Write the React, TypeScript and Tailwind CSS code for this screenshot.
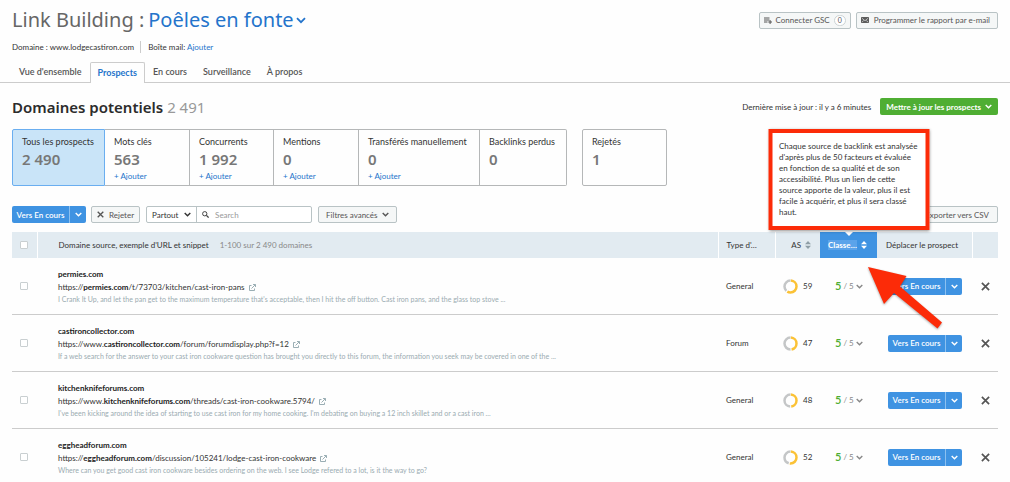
import type { ReactNode } from "react";

type Card = { label: string; value: string; add?: boolean; active?: boolean; size: string };

const cards: Card[] = [
  { label: "Tous les prospects", value: "2 490", active: true, size: "w-[93px]" },
  { label: "Mots clés", value: "563", add: true, size: "w-[85px]" },
  { label: "Concurrents", value: "1 992", add: true, size: "w-[84px]" },
  { label: "Mentions", value: "0", add: true, size: "w-[85px]" },
  { label: "Transférés manuellement", value: "0", add: true, size: "w-[121px]" },
  { label: "Backlinks perdus", value: "0", size: "w-[87px]" },
];

type Prospect = { domain: string; before: string; after: string; snippet: string; type: string; score: number };

const prospects: Prospect[] = [
  {
    domain: "permies.com",
    before: "https://",
    after: "/t/73703/kitchen/cast-iron-pans",
    snippet:
      "I Crank It Up, and let the pan get to the maximum temperature that's acceptable, then I hit the off button. Cast iron pans, and the glass top stove ...",
    type: "General",
    score: 59,
  },
  {
    domain: "castironcollector.com",
    before: "https://www.",
    after: "/forum/forumdisplay.php?f=12",
    snippet:
      "If a web search for the answer to your cast iron cookware question has brought you directly to this forum, the information you seek may be covered in one of the ...",
    type: "Forum",
    score: 47,
  },
  {
    domain: "kitchenknifeforums.com",
    before: "https://www.",
    after: "/threads/cast-iron-cookware.5794/",
    snippet:
      "I've been kicking around the idea of starting to use cast iron for my home cooking. I'm debating on buying a 12 inch skillet and or a cast iron ...",
    type: "General",
    score: 48,
  },
  {
    domain: "eggheadforum.com",
    before: "https://",
    after: "/discussion/105241/lodge-cast-iron-cookware",
    snippet: "Where can you get good cast iron cookware besides ordering on the web. I see Lodge refered to a lot, is it the way to go?",
    type: "General",
    score: 52,
  },
];

const tabs = ["Vue d'ensemble", "Prospects", "En cours", "Surveillance", "À propos"];

function Chevron({ className = "h-[5px] w-[7px]", thick = 2 }: { className?: string; thick?: number }) {
  return (
    <svg viewBox="0 0 10 7" className={className} fill="none" stroke="currentColor" strokeWidth={thick} aria-hidden="true">
      <path d="M1 1.2 5 5.2 9 1.2" />
    </svg>
  );
}

function Cross({ className }: { className: string }) {
  return (
    <svg viewBox="0 0 10 10" className={className} fill="none" stroke="currentColor" strokeWidth="1.9" aria-hidden="true">
      <path d="M1 1 9 9M9 1 1 9" />
    </svg>
  );
}

function Sorter({ color }: { color: string }) {
  return (
    <svg viewBox="0 0 6 8" className={`h-2 w-[6px] ${color}`} fill="currentColor" aria-hidden="true">
      <path d="M3 0 6 3.2H0ZM3 8 0 4.8H6Z" />
    </svg>
  );
}

function ExternalIcon() {
  return (
    <svg viewBox="0 0 14 14" className="h-[7px] w-[7px] text-[#8fa5ab]" fill="none" stroke="currentColor" strokeWidth="1.8" aria-hidden="true">
      <path d="M5 3H1V13H11V9M5 9 12.5 1.5M8 1H13V6" />
    </svg>
  );
}

function Donut({ value }: { value: number }) {
  return (
    <svg viewBox="0 0 30 30" className="h-[15px] w-[15px] -rotate-90" fill="none" strokeWidth="5" aria-hidden="true">
      <circle cx="15" cy="15" r="12" stroke="#c4c6c7" pathLength="100" strokeDasharray={`${96 - value} 100`} strokeDashoffset={-value - 2} />
      <circle cx="15" cy="15" r="12" stroke="#fbc236" pathLength="100" strokeDasharray={`${value - 2} 100`} strokeDashoffset="-1" />
    </svg>
  );
}

function SplitButton() {
  return (
    <span className="inline-flex h-[17px] overflow-hidden rounded-xs bg-[#3f93e2] align-middle text-white">
      <button type="button" className="w-[58px] border-r border-[#8cc0f0] text-center font-semibold">
        Vers En cours
      </button>
      <button type="button" aria-label="Plus d'options" className="flex w-4 items-center justify-center">
        <Chevron />
      </button>
    </span>
  );
}

function GhostButton({ children, className = "" }: { children: ReactNode; className?: string }) {
  return (
    <button
      type="button"
      className={`flex h-[17px] shrink-0 items-center rounded-xs border border-[#b9c3c5] bg-[#f5f7f7] text-[#555] ${className}`}
    >
      {children}
    </button>
  );
}

function Tick({ label }: { label: string }) {
  return (
    <input
      type="checkbox"
      aria-label={label}
      className="ml-2 block h-2 w-2 appearance-none rounded-[1px] border border-[#c9cfd1] bg-white checked:bg-[#3f93e2]"
    />
  );
}

function Tip() {
  return (
    <div
      role="tooltip"
      className="absolute bottom-full left-1/2 z-10 mb-[2px] w-[161px] -translate-x-1/2 border-4 border-[#fc2b08] bg-white px-[7px] py-2 text-left font-normal leading-[11px] whitespace-nowrap text-[#333] shadow-[0_1px_3px_rgba(0,0,0,0.45)]"
    >
      Chaque source de backlink est analysée
      <br />
      d'après plus de 50 facteurs et évaluée
      <br />
      en fonction de sa qualité et de son
      <br />
      accessibilité. Plus un lien de cette
      <br />
      source apporte de la valeur, plus il est
      <br />
      facile à acquérir, et plus il sera classé
      <br />
      haut.
    </div>
  );
}

function RedArrow() {
  return (
    <svg
      viewBox="0 0 76 64"
      className="pointer-events-none absolute top-[35px] left-12 z-10 h-16 w-[76px] max-w-none drop-shadow-[0_1px_1px_rgba(0,0,0,0.35)]"
      fill="#fc2b08"
      aria-hidden="true"
    >
      <path d="M0 0 38.5 9 32 19.5 74 55.5 69.5 61.5 26 26 16 37Z" />
    </svg>
  );
}

export default function App() {
  return (
    <div className="min-h-screen bg-[#fefefe] pt-2 font-['Lato',sans-serif] text-[8px] leading-3 text-[#333]">
      <header>
        <div className="flex h-6 items-center justify-between px-3">
          <h1 className="flex items-center gap-1 font-['Noto_Sans',sans-serif] text-[20px] leading-6 text-[#666]">
            <span>Link Building :</span>
            <button type="button" className="flex items-center gap-[2px] text-[#2474cb]">
              Poêles en fonte
              <Chevron className="h-[7px] w-[10px]" thick={1.8} />
            </button>
          </h1>
          <div className="flex gap-[5px]">
            <GhostButton className="gap-1 px-1">
              <svg viewBox="0 0 16 14" className="h-[7px] w-2" fill="none" stroke="currentColor" strokeWidth="2" aria-hidden="true">
                <path d="M0 2H11M0 6H11M0 10H7M8.5 10H16M12.2 6.2V14" />
              </svg>
              Connecter GSC
              <span className="flex h-[11px] w-3 items-center justify-center rounded-full border border-[#ccd3d5] bg-white text-[7px] leading-none">0</span>
            </GhostButton>
            <GhostButton className="gap-[5px] pr-[7px] pl-1">
              <svg viewBox="0 0 16 12" className="h-[6px] w-2" aria-hidden="true">
                <rect width="16" height="12" rx="1.5" fill="#5c5c5c" />
                <path d="M2 2.5 8 7.5 14 2.5M2 10 5.5 7M14 10 10.5 7" fill="none" stroke="#f5f7f7" strokeWidth="1.2" />
              </svg>
              Programmer le rapport par e-mail
            </GhostButton>
          </div>
        </div>
        <div className="mt-[9px] flex h-3 items-center px-3">
          <span className="border-r border-[#ccc] pr-[6px]">Domaine : www.lodgecastiron.com</span>
          <span className="pl-[7px]">
            Boîte mail:{" "}
            <a href="#mail" className="text-[#2474cb]">
              Ajouter
            </a>
          </span>
        </div>
        <nav className="mt-[9px] flex h-[21px] items-end border-b border-[#ccc] pl-[11px] text-[9px] font-semibold text-[#555]">
          {tabs.map((tab) =>
            tab === "Prospects" ? (
              <a
                key={tab}
                href="#prospects"
                aria-current="page"
                className="-mb-px flex h-[21px] items-center rounded-t-xs border border-b-0 border-[#ccc] bg-[#fefefe] px-[7px] font-bold text-[#2474cb]"
              >
                {tab}
              </a>
            ) : (
              <a key={tab} href="#tab" className="flex h-5 items-center px-2">
                {tab}
              </a>
            ),
          )}
        </nav>
      </header>

      <main className="px-3">
        <div className="mt-[15px] flex h-[17px] items-center justify-between">
          <h2 className="flex gap-1 font-['Noto_Sans',sans-serif] text-[15px] font-semibold text-[#2c2c2c]">
            Domaines potentiels
            <span className="font-normal text-[#999]">2 491</span>
          </h2>
          <div className="flex items-center gap-[9px]">
            <span>Dernière mise à jour : il y a 6 minutes</span>
            <button type="button" className="flex h-[17px] items-center gap-1 rounded-xs bg-[#4fae33] px-[6px] font-bold text-white">
              Mettre à jour les prospects
              <Chevron />
            </button>
          </div>
        </div>

        <div className="mt-[14px] flex gap-[15px]">
          <ul className="flex">
            {cards.map((card, i) => (
              <li
                key={card.label}
                className={`h-[57px] border px-[9px] pt-[6px] whitespace-nowrap ${card.size} ${i ? "border-l-0" : "rounded-l-xs"} ${
                  i === cards.length - 1 ? "rounded-r-xs" : ""
                } ${card.active ? "border-[#6aaef0] bg-[#c9e4f8]" : "border-[#b5b7b8]"}`}
              >
                <div className="text-[9px]">{card.label}</div>
                <div className="mt-[2px] font-['Noto_Sans',sans-serif] text-[15px] leading-[18px] font-semibold text-[#777]">{card.value}</div>
                {card.add && (
                  <a href="#ajouter" className="mt-[2px] block text-[#2474cb]">
                    + Ajouter
                  </a>
                )}
              </li>
            ))}
          </ul>
          <div className="h-[57px] w-[85px] rounded-xs border border-[#b5b7b8] px-[9px] pt-[6px]">
            <div className="text-[9px]">Rejetés</div>
            <div className="mt-[2px] font-['Noto_Sans',sans-serif] text-[15px] leading-[18px] font-semibold text-[#777]">1</div>
          </div>
        </div>

        <div className="mt-5 flex h-[17px] items-center">
          <SplitButton />
          <GhostButton className="ml-[5px] gap-[5px] px-[5px]">
            <Cross className="h-[7px] w-[7px]" />
            Rejeter
          </GhostButton>
          <div className="ml-[6px] flex h-[17px] w-[166px] rounded-xs border border-[#b9c3c5] bg-white">
            <div className="relative flex w-[50px] items-center border-r border-[#b9c3c5]">
              <select aria-label="Portée de la recherche" className="h-full w-full appearance-none pl-[5px] outline-none">
                <option>Partout</option>
              </select>
              <Chevron className="pointer-events-none absolute right-[5px] h-[5px] w-[7px]" />
            </div>
            <label className="flex min-w-0 flex-1 items-center gap-[6px] pl-[5px]">
              <svg viewBox="0 0 14 14" className="h-[7px] w-[7px] shrink-0" fill="none" stroke="#444" strokeWidth="2" aria-hidden="true">
                <circle cx="5.5" cy="5.5" r="4.3" />
                <path d="M8.8 8.8 13.2 13.2" strokeWidth="2.6" />
              </svg>
              <input type="text" aria-label="Search" placeholder="Search" className="w-full min-w-0 outline-none placeholder:text-[#999]" />
            </label>
          </div>
          <GhostButton className="ml-[6px] gap-1 px-[7px]">
            Filtres avancés
            <Chevron />
          </GhostButton>
          <GhostButton className="ml-auto px-2">Exporter vers CSV</GhostButton>
        </div>

        <table className="mt-[9px] w-full table-fixed border-collapse">
          <colgroup>
            <col className="w-[25px]" />
            <col />
            <col className="w-[57px]" />
            <col className="w-[45px]" />
            <col className="w-[57px]" />
            <col className="w-[95px]" />
            <col className="w-[26px]" />
          </colgroup>
          <thead>
            <tr className="h-[26px] bg-[#e2ebf1] text-left whitespace-nowrap *:font-normal">
              <th className="border-r border-white">
                <Tick label="Tout sélectionner" />
              </th>
              <th className="pl-[21px]">
                Domaine source, exemple d'URL et snippet
                <span className="pl-[11px] text-[#888]">1-100 sur 2 490 domaines</span>
              </th>
              <th className="border-l border-white pl-2">Type d'…</th>
              <th className="border-l border-white">
                <span className="flex items-center justify-end gap-1 pr-[9px]">
                  AS <Sorter color="text-[#8e9ea6]" />
                </span>
              </th>
              <th className="relative bg-[#3f93e2] text-white">
                <button type="button" className="flex w-full items-center gap-1 pl-2 font-bold">
                  <span className="bg-[#5ba3ea] leading-[10px]">Classe…</span> <Sorter color="text-white" />
                </button>
                <svg viewBox="0 0 8 4" className="absolute top-0 left-[25px] h-1 w-2" fill="#fff" aria-hidden="true">
                  <path d="M0 0H8L4 4Z" />
                </svg>
                <Tip />
                <RedArrow />
              </th>
              <th className="border-r border-white pl-[9px]">Déplacer le prospect</th>
              <th aria-label="Supprimer" />
            </tr>
          </thead>
          <tbody>
            {prospects.map((p) => (
              <tr key={p.domain} className="border-b border-[#ccc] last:border-b-0">
                <td>
                  <Tick label={`Sélectionner ${p.domain}`} />
                </td>
                <td className="pt-[10px] pb-[9px] pl-[21px] whitespace-nowrap">
                  <div className="leading-[13px] font-bold text-[#222]">{p.domain}</div>
                  <div className="flex items-center gap-1 leading-[13px]">
                    <a href="#source">
                      {p.before}
                      <b className="font-bold text-[#222]">{p.domain}</b>
                      {p.after}
                    </a>
                    <ExternalIcon />
                  </div>
                  <div className="text-[7px] leading-[11px] text-[#9aabb1]">{p.snippet}</div>
                </td>
                <td className="pl-2">{p.type}</td>
                <td>
                  <span className="flex items-center gap-[5px] pl-2">
                    <Donut value={p.score} />
                    {p.score}
                  </span>
                </td>
                <td>
                  <button type="button" className="flex w-full items-center gap-[2px] pl-[15px] text-[#888]">
                    <span className="text-[11px] font-semibold text-[#4fae33]">5</span>
                    <span>/ 5</span>
                    <Chevron />
                  </button>
                </td>
                <td className="pl-[11px]">
                  <SplitButton />
                </td>
                <td>
                  <button type="button" aria-label={`Supprimer ${p.domain}`} className="mx-auto block text-[#555]">
                    <Cross className="h-[9px] w-[9px]" />
                  </button>
                </td>
              </tr>
            ))}
          </tbody>
        </table>
      </main>
    </div>
  );
}
